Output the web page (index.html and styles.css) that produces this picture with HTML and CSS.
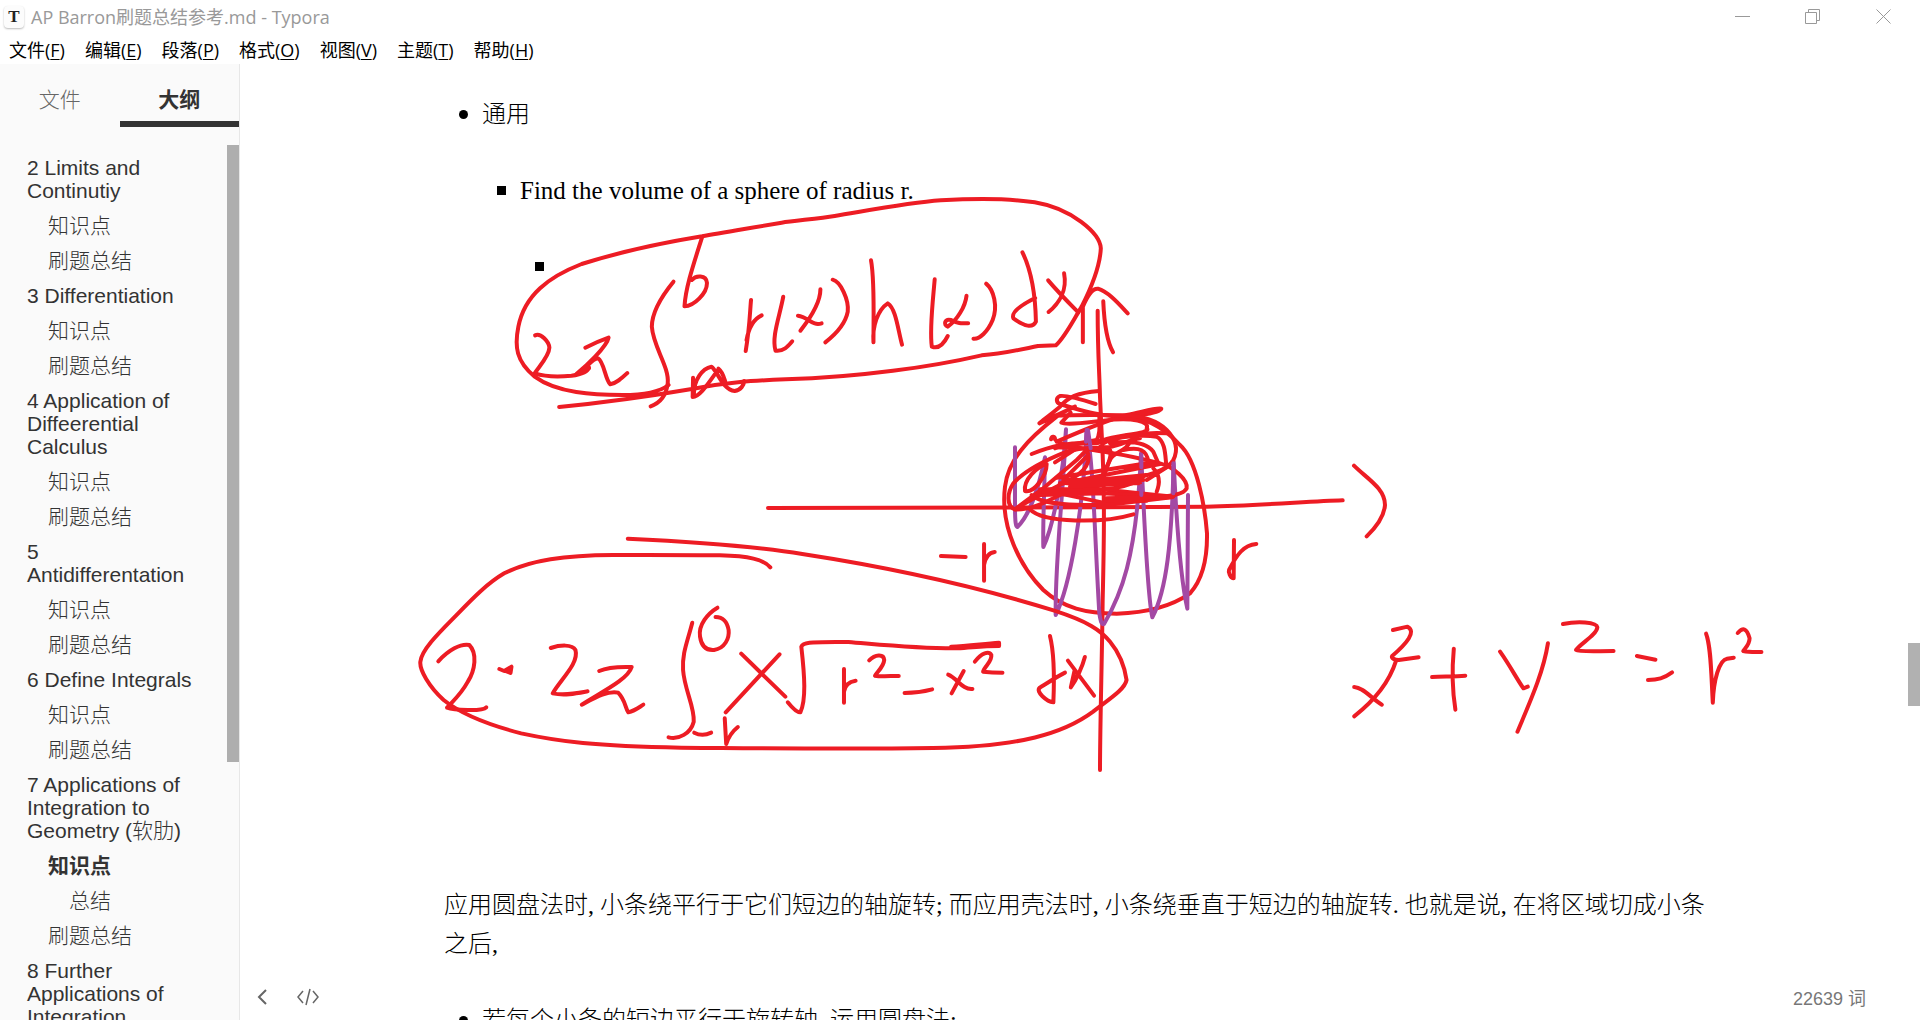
FILE: index.html
```html
<!DOCTYPE html>
<html lang="zh-CN">
<head>
<meta charset="utf-8">
<title>AP Barron刷题总结参考.md - Typora</title>
<link rel="stylesheet" href="styles.css">
</head>
<body>
<div class="app">
  <header class="titlebar">
    <span class="app-icon">T</span>
    <h1 class="title">AP Barron刷题总结参考.md - Typora</h1>
    <div class="window-controls">
      <button class="window-button" aria-label="最小化"><svg width="16" height="16" viewBox="0 0 16 16"><path d="M1 7.500h15"/></svg></button>
      <button class="window-button" aria-label="还原"><svg width="16" height="16" viewBox="0 0 16 16"><path d="M.5 3.500h11v11h-11zM3.500 3.500v-3h11v11h-3"/></svg></button>
      <button class="window-button" aria-label="关闭"><svg width="16" height="16" viewBox="0 0 16 16"><path d="M.5.5l14 14M14.500.5l-14 14"/></svg></button>
    </div>
  </header>
  <nav class="menubar">
    <button>文件(<u>F</u>)</button>
    <button>编辑(<u>E</u>)</button>
    <button>段落(<u>P</u>)</button>
    <button>格式(<u>O</u>)</button>
    <button>视图(<u>V</u>)</button>
    <button>主题(<u>T</u>)</button>
    <button>帮助(<u>H</u>)</button>
  </nav>
  <div class="workspace">
    <aside class="sidebar">
      <div class="tabs">
        <button class="tab">文件</button>
        <button class="tab active">大纲</button>
      </div>
      <div class="outline-area">
        <nav class="outline">
          <a href="#s2">2 Limits and Continutiy</a>
          <a class="level-2" href="#s2a">知识点</a>
          <a class="level-2" href="#s2b">刷题总结</a>
          <a href="#s3">3 Differentiation</a>
          <a class="level-2" href="#s3a">知识点</a>
          <a class="level-2" href="#s3b">刷题总结</a>
          <a href="#s4">4 Application of Diffeerential Calculus</a>
          <a class="level-2" href="#s4a">知识点</a>
          <a class="level-2" href="#s4b">刷题总结</a>
          <a href="#s5">5 Antidifferentation</a>
          <a class="level-2" href="#s5a">知识点</a>
          <a class="level-2" href="#s5b">刷题总结</a>
          <a href="#s6">6 Define Integrals</a>
          <a class="level-2" href="#s6a">知识点</a>
          <a class="level-2" href="#s6b">刷题总结</a>
          <a href="#s7">7 Applications of Integration to Geometry (软肋)</a>
          <a class="level-2 current" href="#s7a">知识点</a>
          <a class="level-3" href="#s7a1">总结</a>
          <a class="level-2" href="#s7b">刷题总结</a>
          <a href="#s8">8 Further Applications of Integration</a>
        </nav>
        <div class="scrollbar"><div class="outline-thumb"></div></div>
      </div>
    </aside>
    <main class="editor">
      <article class="document">
        <ul>
          <li><p>通用</p>
            <ul>
              <li><p class="problem">Find the volume of a sphere of radius r.</p>
                <ul><li><div class="sketch-space"></div></li></ul>
              </li>
            </ul>
          </li>
        </ul>
        <p>应用圆盘法时, 小条绕平行于它们短边的轴旋转; 而应用壳法时, 小条绕垂直于短边的轴旋转. 也就是说, 在将区域切成小条之后,</p>
        <ul>
          <li><p>若每个小条的短边平行于旋转轴, 运用圆盘法;</p></li>
        </ul>
        <svg class="ink" width="1360" height="600" viewBox="410 190 1360 600" role="img" aria-label="球体体积的手写推导">
          <!-- shell method formula -->
          <svg x="500" y="180" width="640" height="240" viewBox="0 0 1568 720" preserveAspectRatio="none">
            <path d="M145 681C280 665 360 650 470 627C560 605 620 602 700 598C880 592 1060 560 1180 526C1230 522 1270 510 1318 498L1362 496C1385 470 1405 420 1425 380C1450 320 1470 260 1472 205C1470 160 1400 85 1310 67C1230 52 1140 57 1080 61C1000 68 900 92 820 108C780 116 720 122 690 128C600 147 540 158 495 169C380 192 270 225 200 252C120 290 60 345 45 440C35 500 40 545 85 590C140 640 230 645 300 645C350 645 390 637 413 615"/>
            <path d="M425 305C395 350 372 395 372 440C375 500 415 560 411 610C408 640 395 668 369 679"/>
            <path d="M495 172C475 250 455 320 452 379C475 378 508 340 507 308C505 285 480 285 470 300"/>
            <path d="M86 466C100 458 120 485 121 503C120 530 95 560 85 580C110 590 150 590 175 587C200 583 215 575 218 562"/>
            <path d="M209 503C230 490 250 480 266 473C262 500 210 560 187 582C210 570 225 535 240 535C255 545 258 600 270 613C285 610 298 595 312 579M195 580L218 565"/>
            <path d="M473 593L472 651C490 650 510 610 535 568M475 640C476 600 495 565 518 560C532 570 545 630 575 633C590 630 598 615 598 603M535 566C545 575 548 590 552 605"/>
            <path d="M615 360C612 400 612 440 602 513M604 480C610 440 625 415 641 406"/>
            <path d="M694 350C685 410 665 470 675 512C695 515 705 500 716 484"/>
            <path d="M785 328C785 370 760 415 736 452M730 407C755 410 765 440 788 430"/>
            <path d="M815 299C835 305 855 360 852 395C845 440 815 470 797 487"/>
            <path d="M909 241C918 300 915 400 915 487C912 440 925 390 950 370C970 385 975 450 985 494"/>
            <path d="M1065 298C1060 370 1052 450 1058 500C1075 508 1088 490 1097 468"/>
            <path d="M1143 347C1140 380 1120 420 1097 440C1085 435 1090 415 1105 420C1120 430 1130 430 1147 430"/>
            <path d="M1191 311C1210 330 1220 380 1207 420C1195 455 1175 478 1160 476"/>
            <path d="M1280 217C1305 280 1312 360 1313 425C1305 445 1285 440 1258 415C1250 395 1285 370 1311 354"/>
            <path d="M1343 301C1370 340 1395 370 1417 397M1382 280C1390 330 1370 370 1344 396"/>
            <path d="M1428 487V380C1440 345 1450 325 1465 326C1490 335 1515 370 1538 400M1478 364C1480 420 1485 480 1502 517"/>
          </svg>
          <!-- axes, circle and vertical strips -->
          <svg x="960" y="260" width="440" height="380" viewBox="0 0 1320 1140">
            <path d="M413 152C413 280 418 330 420 410L425 520C435 700 432 850 428 1020C426 1200 420 1400 420 1530"/>
            <path d="M-576 744L430 742L740 740C900 736 1050 724 1148 721M1182 617C1220 655 1275 685 1275 735C1272 775 1245 805 1220 829"/>
            <path d="M290 470C200 540 145 600 135 680C120 800 180 920 250 990C310 1045 380 1060 470 1061C570 1058 640 1035 690 1000C735 950 742 880 741 820C735 740 710 600 660 555C610 500 550 465 470 468"/>
            <path d="M822 840L821 955C810 955 805 935 807 930C830 885 850 855 889 852"/>
            <path class="violet" d="M165 562V740C165 790 168 800 172 801C205 770 235 690 255 592C253 700 248 800 250 861C280 800 310 640 318 508C310 700 285 900 287 1065C330 980 370 750 380 510C400 600 405 850 418 1060C422 1085 425 1095 432 1092C480 1010 530 900 543 580C550 700 560 1000 577 1072C620 990 635 850 641 605C650 800 660 950 682 1046L684 705"/>
          </svg>
          <!-- scribbled shading in the upper half -->
          <svg x="1000" y="380" width="220" height="150" viewBox="0 0 660 450">
            <path d="M297 33C230 38 205 52 180 80C150 105 130 120 118 130L225 80C200 90 150 120 130 125"/>
            <path d="M287 72C250 60 200 45 180 48C165 55 170 68 180 72C220 85 270 100 310 105C380 115 480 100 484 86C470 82 430 95 380 105C330 118 250 150 170 185"/>
            <path d="M160 107C230 104 330 105 370 106C440 108 480 130 500 150C530 180 535 210 520 240C500 275 430 290 390 295L180 310"/>
            <path d="M212 98L184 128C200 138 280 125 310 122C400 110 450 125 440 145C460 160 350 165 310 180C250 195 190 190 165 205"/>
            <path d="M95 222C150 200 200 185 290 190C350 170 420 155 500 160"/>
            <path d="M153 178C155 165 165 170 165 178C180 200 290 210 340 220C400 230 440 240 480 250C520 260 565 300 560 325C545 355 450 350 400 350"/>
            <path d="M165 247L230 205L170 202L290 180C300 165 300 140 298 110"/>
            <path d="M45 388C20 380 20 340 40 310C80 265 150 235 200 215C250 200 300 200 330 210C340 230 310 280 310 300"/>
            <path d="M45 388C80 360 110 340 130 325L230 240L260 210C275 240 265 275 190 310C130 340 90 360 45 388C90 390 130 370 160 355L270 300M190 300L265 225"/>
            <path d="M140 252C110 260 70 300 75 333C100 340 140 290 140 252"/>
            <path d="M170 293L440 250L480 252L190 310L440 285L200 330L430 290C400 320 300 340 230 320L520 350L320 370L120 328H320"/>
            <path d="M90 388C130 430 310 430 400 403M95 345C130 380 270 375 320 375L515 352L310 340L120 345"/>
            <path d="M310 190C350 165 440 165 470 170C500 185 495 240 500 262L440 300M330 190C400 180 440 190 460 215L475 250M370 210C420 200 440 210 445 245M300 200C340 210 380 180 420 175M390 185C380 215 340 215 330 240L310 280M460 265C480 285 480 310 470 335"/>
            <path d="M200 300H430M200 310H420M210 320L400 310M320 355L500 350M320 362H440M130 335H300"/>
            <path class="violet" d="M260 150L258 185M264 150L272 205M424 225V262M424 318V345M520 250V340"/>
          </svg>
          <!-- evaluated integral -->
          <svg x="400" y="520" width="760" height="270" viewBox="0 0 1568 810" preserveAspectRatio="none">
            <path d="M470 56C600 65 740 80 830 102C1000 140 1180 195 1350 272C1420 305 1445 330 1465 365C1485 400 1495 440 1499 480C1495 510 1460 540 1430 575C1370 640 1280 680 1100 684C900 688 700 684 580 683C400 678 330 665 250 640C170 610 120 575 90 540C60 500 40 450 42 425C45 385 90 325 120 280C150 235 180 190 215 160C270 120 340 106 440 105C530 104 600 105 660 106C720 108 750 118 764 142"/>
            <path d="M1116 108L1167 111M1205 72V182M1205 135C1208 110 1215 98 1227 96"/>
            <path d="M79 424C100 390 125 370 143 375C160 400 155 450 140 485C125 525 108 545 97 563C110 570 170 575 178 562"/>
            <path d="M205 447L215 453L230 440L228 459L216 452"/>
            <path d="M311 384C330 375 355 372 362 390C370 430 330 480 315 520C340 528 365 520 387 514"/>
            <path d="M411 453C430 440 455 440 478 441C470 480 410 520 375 554C400 535 430 510 450 518C465 540 465 565 471 577C485 572 493 562 502 554"/>
            <path d="M603 308C592 370 582 400 584 450C587 510 608 560 606 605C600 640 575 660 554 652"/>
            <path d="M655 263C635 280 615 315 619 350C622 380 632 392 648 390C670 385 680 355 678 330C675 305 668 292 651 291"/>
            <path d="M607 638C620 648 632 645 642 638M670 595L673 672C678 650 685 635 697 621"/>
            <path d="M704 401L795 530M783 403L672 577"/>
            <path d="M800 547C810 565 820 578 826 577C838 540 835 470 828 380C832 365 850 367 925 366C1000 375 1070 386 1150 385C1180 383 1200 378 1236 378V368C1200 372 1170 378 1137 380"/>
            <path d="M916 447V548M916 515C918 495 925 485 940 482"/>
            <path d="M968 421C980 403 998 400 999 420C998 440 985 455 980 467C990 470 1010 468 1029 468"/>
            <path d="M1041 519C1060 519 1080 515 1098 508"/>
            <path d="M1131 464C1150 475 1160 510 1181 507M1163 453L1138 520"/>
            <path d="M1186 425C1200 398 1215 392 1220 405C1222 425 1205 440 1203 455C1215 457 1230 458 1243 458"/>
            <path d="M1341 348C1350 400 1350 480 1348 547C1335 545 1310 515 1320 503C1335 490 1355 470 1372 458"/>
            <path d="M1378 422L1432 527M1413 411C1408 440 1395 480 1384 502L1392 450"/>
          </svg>
          <!-- circle equation -->
          <svg x="1300" y="600" width="620" height="180" viewBox="0 0 1568 540" preserveAspectRatio="none">
            <path d="M235 90L272 80C295 95 270 130 233 168C230 175 240 180 250 180L300 172"/>
            <path d="M243 182C225 250 190 300 137 349M137 261C160 262 180 295 207 314"/>
            <path d="M334 231C360 229 390 230 418 227M389 146C384 210 385 270 393 329"/>
            <path d="M506 155C530 195 550 240 565 265L576 260M627 130C615 220 580 310 550 395"/>
            <path d="M665 72C700 63 750 65 752 82C750 105 710 130 698 150C705 156 750 153 793 153"/>
            <path d="M852 168L899 179M880 240C905 240 920 235 941 217"/>
            <path d="M1027 101C1040 140 1040 230 1044 308C1046 240 1060 180 1080 176L1097 173"/>
            <path d="M1107 99C1120 82 1130 83 1137 115C1137 135 1125 145 1121 153C1135 157 1150 156 1167 156"/>
          </svg>
        </svg>
      </article>
      <div class="scrollbar"><div class="page-thumb"></div></div>
      <footer class="statusbar">
        <button class="status-button" aria-label="隐藏侧边栏"><svg width="12" height="18" viewBox="0 0 12 18"><path stroke-width="2" d="M10 2L3 9l7 7"/></svg></button>
        <button class="status-button" aria-label="源代码模式"><svg width="22" height="18" viewBox="0 0 22 18"><path stroke-width="1.500" d="M6 3L1 9l5 6M16 3l5 6-5 6M13 1L9 17"/></svg></button>
        <button class="word-count">22639 词</button>
      </footer>
    </main>
  </div>
</div>
</body>
</html>
```
FILE: styles.css
```css
* { box-sizing: border-box; }

body {
  margin: 0;
  background: #fff;
  font-family: "Liberation Sans", "Noto Sans CJK SC", sans-serif;
}

button {
  padding: 0;
  border: 0;
  background: none;
  color: inherit;
  font: inherit;
}

svg { display: block; }

.app {
  display: flex;
  flex-direction: column;
  height: 100vh;
  overflow: hidden;
}

.titlebar {
  display: flex;
  align-items: center;
  flex: none;
  height: 34px;
  padding: 0 28px 0 4px;
  font-family: "Open Sans", "Noto Sans CJK SC", sans-serif;
  color: #999;
}

.app-icon {
  width: 20px;
  height: 22px;
  border-radius: 4px;
  background: #fcfcfc;
  box-shadow: 0 1px 2px #bbb;
  color: #222;
  font: bold 17px/22px "Liberation Serif", serif;
  text-align: center;
}

.title {
  flex: 1;
  margin: 0 0 0 7px;
  font-size: 18px;
  font-weight: 400;
  line-height: 24px;
}

.window-controls {
  display: flex;
  gap: 55px;
}

.window-button svg {
  fill: none;
  stroke: #999;
}

.menubar {
  display: flex;
  flex: none;
  gap: 20px;
  height: 30px;
  padding-left: 9px;
  color: #000;
  font: 18px/32px "Open Sans", "Noto Sans CJK SC", sans-serif;
}

.menubar u { text-underline-offset: 2px; }

.workspace {
  display: flex;
  flex: 1;
  min-height: 0;
}

.sidebar {
  display: flex;
  flex-direction: column;
  flex: none;
  width: 240px;
  border-right: 1px solid #e7e7e7;
  background: #fafafa;
  color: #333;
  font-size: 21px;
  font-weight: 300;
}

.tabs {
  display: flex;
  flex: none;
  height: 63px;
  margin-bottom: 18px;
}

.tab {
  flex: 1;
  padding-top: 10px;
  border-bottom: 6px solid transparent;
  color: #666;
}

.tab.active {
  border-bottom-color: #333;
  color: #333;
  font-weight: 700;
}

.outline-area {
  display: flex;
  flex: 1;
  min-height: 0;
}

.outline {
  flex: 1;
  padding: 5px 30px 0 27px;
  overflow: hidden;
}

.outline a {
  display: block;
  padding: 6px 0;
  color: #333;
  line-height: 23px;
  text-decoration: none;
}

.outline .level-2 { padding-left: 21px; }
.outline .level-3 { padding-left: 42px; }
.outline .current { font-weight: 700; }

.scrollbar {
  display: flex;
  flex-direction: column;
  flex: none;
  width: 12px;
}

.scrollbar::before,
.scrollbar::after { content: ""; }

.outline-thumb {
  flex: 617 0 0;
  background: #aeaeae;
}

.outline-area .scrollbar::after { flex: 258 0 0; }

.page-thumb {
  flex: 63 0 0;
  background: #b1b1b1;
}

.editor > .scrollbar::before { flex: 579 0 0; }
.editor > .scrollbar::after { flex: 314 0 0; }

.editor {
  position: relative;
  display: flex;
  flex: 1;
  min-width: 0;
  overflow: hidden;
}

.document {
  position: relative;
  flex: 1;
  max-width: 1268px;
  margin: 0 auto;
  padding: 31px 0 0 4px;
  color: #000;
  font: 300 24px/39px "Liberation Serif", "Noto Sans CJK SC", serif;
}

.document p { margin: 0 0 37px; }

.document .problem { font-size: 25px; }

.document ul {
  margin: 0;
  padding-left: 38px;
  list-style: none;
}

.document li { position: relative; }

.document li::before {
  content: "";
  position: absolute;
  top: 15px;
  left: -23px;
  width: 9px;
  height: 9px;
  border-radius: 50%;
  background: #000;
}

.document li li::before { border-radius: 0; }

.sketch-space {
  height: 602px;
  margin-bottom: 37px;
}

.ink {
  position: absolute;
  top: 126px;
  left: -30px;
}

.ink,
.ink svg { overflow: visible; }

.ink path {
  fill: none;
  stroke: #ed1c24;
  stroke-width: 4px;
  stroke-linecap: round;
  stroke-linejoin: round;
  vector-effect: non-scaling-stroke;
}

.ink .violet { stroke: #a349a4; }

.statusbar {
  position: absolute;
  right: 54px;
  bottom: 8px;
  left: 16px;
  display: flex;
  align-items: center;
  gap: 29px;
  height: 30px;
  color: #777;
  font-size: 18px;
}

.status-button svg {
  fill: none;
  stroke: #666;
}

.word-count { margin-left: auto; }
```
